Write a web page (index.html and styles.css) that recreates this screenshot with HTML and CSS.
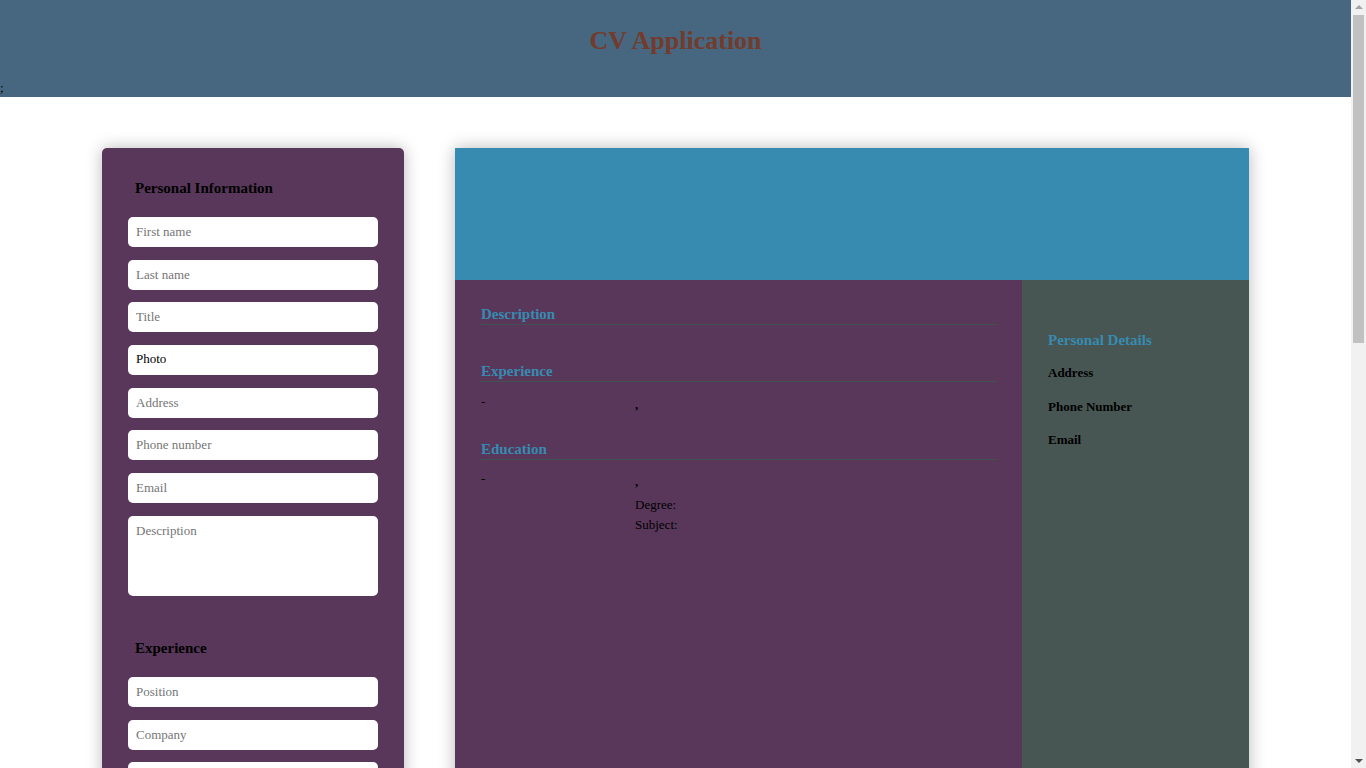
FILE: index.html
```html
<!DOCTYPE html>
<html lang="en">
<head>
<meta charset="utf-8">
<title>CV Application</title>
<link rel="stylesheet" href="styles.css">
</head>
<body>
<div class="page">
  <header class="app-header">
    <h1 class="app-title">CV Application</h1>
    <div class="stray">;</div>
  </header>
  <main class="workspace">
    <form class="editor">
      <section class="form-section">
        <h2 class="form-title">Personal Information</h2>
        <div class="fields">
          <input class="field" type="text" placeholder="First name">
          <input class="field" type="text" placeholder="Last name">
          <input class="field" type="text" placeholder="Title">
          <label class="field file-label">Photo</label>
          <input class="field" type="text" placeholder="Address">
          <input class="field" type="text" placeholder="Phone number">
          <input class="field" type="text" placeholder="Email">
          <textarea class="field area" placeholder="Description"></textarea>
        </div>
      </section>
      <section class="form-section later">
        <h2 class="form-title">Experience</h2>
        <div class="fields">
          <input class="field" type="text" placeholder="Position">
          <input class="field" type="text" placeholder="Company">
          <input class="field" type="text" placeholder="City">
          <input class="field" type="text" placeholder="From">
          <input class="field" type="text" placeholder="To">
        </div>
      </section>
      <section class="form-section later">
        <h2 class="form-title">Education</h2>
        <div class="fields">
          <input class="field" type="text" placeholder="University name">
          <input class="field" type="text" placeholder="City">
          <input class="field" type="text" placeholder="Degree">
          <input class="field" type="text" placeholder="Subject">
          <input class="field" type="text" placeholder="From">
          <input class="field" type="text" placeholder="To">
        </div>
      </section>
    </form>

    <article class="cv">
      <div class="cv-head"></div>
      <div class="cv-body">
        <div class="cv-main">
          <section class="cv-section">
            <h3 class="cv-heading">Description</h3>
            <div class="cv-text"></div>
          </section>
          <section class="cv-section">
            <h3 class="cv-heading">Experience</h3>
            <div class="cv-item">
              <div class="cv-dates">-</div>
              <div class="cv-info">
                <div class="cv-info-title">,</div>
              </div>
            </div>
          </section>
          <section class="cv-section edu-section">
            <h3 class="cv-heading">Education</h3>
            <div class="cv-item edu">
              <div class="cv-dates">-</div>
              <div class="cv-info">
                <div class="cv-info-title">,</div>
                <p class="cv-line first">Degree:</p>
                <p class="cv-line">Subject:</p>
              </div>
            </div>
          </section>
        </div>
        <aside class="cv-side">
          <h3 class="side-heading">Personal Details</h3>
          <div class="side-list">
            <div class="side-item">Address</div>
            <div class="side-item">Phone Number</div>
            <div class="side-item">Email</div>
          </div>
        </aside>
      </div>
    </article>
  </main>
</div>
<div class="scrollbar" aria-hidden="true">
  <span class="sb-arrow up"></span>
  <span class="sb-thumb"></span>
  <span class="sb-arrow down"></span>
</div>
</body>
</html>
```

FILE: styles.css
```css
html, body {
  margin: 0;
  padding: 0;
}

body {
  font-family: "Liberation Serif", "Times New Roman", serif;
  background: #ffffff;
  color: #000000;
}

.page {
  margin-right: 15px;
}

.app-header {
  height: 97px;
  background: #46677f;
  box-sizing: border-box;
  padding-top: 26px;
}

.app-title {
  margin: 0;
  text-align: center;
  font-size: 26px;
  line-height: 30px;
  font-weight: bold;
  color: #733b2b;
}

.stray {
  margin-top: 24px;
  font-size: 13px;
  line-height: 15px;
}

.workspace {
  display: flex;
  justify-content: center;
  align-items: flex-start;
  gap: 51px;
  padding: 51px 0 60px;
}

.editor {
  width: 302px;
  box-sizing: border-box;
  background: #58375a;
  border-radius: 5px;
  padding: 32px 26px 40px;
  box-shadow: 0 0 16px rgba(0, 0, 0, 0.28);
  display: flex;
  flex-direction: column;
}

.form-section.later {
  margin-top: 44.5px;
}

.form-title {
  margin: 0 0 20px 7px;
  font-size: 15px;
  line-height: 17px;
  font-weight: bold;
  color: #000000;
}

.fields {
  display: flex;
  flex-direction: column;
  gap: 12.67px;
}

.field {
  display: block;
  width: 250px;
  height: 30px;
  box-sizing: border-box;
  border: none;
  border-radius: 5px;
  background: #ffffff;
  padding: 0 8px;
  font-family: "Liberation Serif", "Times New Roman", serif;
  font-size: 13px;
  color: #000000;
  outline: none;
}

.field::placeholder {
  color: #757575;
}

.file-label {
  line-height: 28px;
}

.area {
  height: 80px;
  padding-top: 7px;
  resize: none;
}

.cv {
  width: 794px;
  background: #58375a;
  box-shadow: 0 0 16px rgba(0, 0, 0, 0.28);
  display: flex;
  flex-direction: column;
}

.cv-head {
  height: 132px;
  background: #378bb0;
}

.cv-body {
  display: grid;
  grid-template-columns: 567px 227px;
  min-height: 991px;
}

.cv-main {
  padding: 26px 25px 26px 26px;
  display: flex;
  flex-direction: column;
  gap: 28px;
}

.cv-section.edu-section {
  margin-top: 1px;
}

.cv-heading {
  margin: 0;
  font-size: 15px;
  line-height: 17px;
  font-weight: bold;
  color: #378bb0;
  padding-bottom: 1px;
  border-bottom: 1px solid #435250;
}

.cv-text {
  height: 10px;
}

.cv-item {
  display: flex;
  margin-top: 12px;
  font-size: 13px;
  line-height: 15px;
}

.cv-item.edu {
  margin-top: 11px;
}

.cv-dates {
  width: 154px;
  flex: none;
}

.cv-info {
  padding-top: 3px;
}

.cv-info-title {
  font-weight: bold;
}

.cv-line {
  margin: 5px 0 0;
}

.cv-line.first {
  margin-top: 8px;
}

.cv-side {
  background: #475652;
  padding: 52px 20px 26px 26px;
}

.side-heading {
  margin: 0 0 16px;
  font-size: 15px;
  line-height: 17px;
  font-weight: bold;
  color: #378bb0;
}

.side-list {
  display: flex;
  flex-direction: column;
  gap: 18.5px;
}

.side-item {
  font-size: 13px;
  line-height: 15px;
  font-weight: bold;
}

.scrollbar {
  position: fixed;
  top: 0;
  right: 0;
  width: 15px;
  height: 100vh;
  background: #f1f1f1;
  box-sizing: border-box;
  padding: 2px 2px;
  display: flex;
  flex-direction: column;
  align-items: center;
}

.sb-arrow {
  width: 0;
  height: 0;
  border-left: 4px solid transparent;
  border-right: 4px solid transparent;
  flex: none;
}

.sb-arrow.up {
  margin-top: 3px;
  border-bottom: 4px solid #a3a3a3;
}

.sb-arrow.down {
  margin-top: auto;
  margin-bottom: 3px;
  border-top: 4px solid #505050;
}

.sb-thumb {
  margin-top: 6px;
  width: 11px;
  height: 328px;
  background: #c1c1c1;
  flex: none;
}
```
